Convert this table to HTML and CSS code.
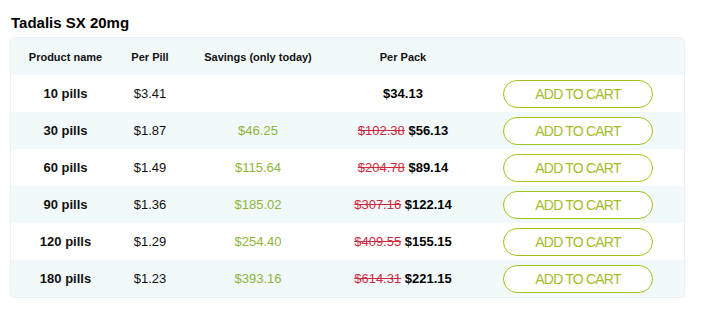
FILE: index.html
```html
<!DOCTYPE html>
<html>
<head>
<meta charset="utf-8">
<link rel="stylesheet" href="styles.css">
</head>
<body>
<h2 class="title">Tadalis SX 20mg</h2>
<div class="table">
  <div class="row head">
    <div>Product name</div><div>Per Pill</div><div>Savings (only today)</div><div>Per Pack</div><div></div>
  </div>
  <div class="row">
    <div class="name">10 pills</div><div>$3.41</div><div class="save"></div><div class="pack"><b>$34.13</b></div><div><button class="cart">ADD TO CART</button></div>
  </div>
  <div class="row alt">
    <div class="name">30 pills</div><div>$1.87</div><div class="save">$46.25</div><div class="pack"><s>$102.38</s> <b>$56.13</b></div><div><button class="cart">ADD TO CART</button></div>
  </div>
  <div class="row">
    <div class="name">60 pills</div><div>$1.49</div><div class="save">$115.64</div><div class="pack"><s>$204.78</s> <b>$89.14</b></div><div><button class="cart">ADD TO CART</button></div>
  </div>
  <div class="row alt">
    <div class="name">90 pills</div><div>$1.36</div><div class="save">$185.02</div><div class="pack"><s>$307.16</s> <b>$122.14</b></div><div><button class="cart">ADD TO CART</button></div>
  </div>
  <div class="row">
    <div class="name">120 pills</div><div>$1.29</div><div class="save">$254.40</div><div class="pack"><s>$409.55</s> <b>$155.15</b></div><div><button class="cart">ADD TO CART</button></div>
  </div>
  <div class="row alt">
    <div class="name">180 pills</div><div>$1.23</div><div class="save">$393.16</div><div class="pack"><s>$614.31</s> <b>$221.15</b></div><div><button class="cart">ADD TO CART</button></div>
  </div>
</div>
</body>
</html>
```
FILE: styles.css
```css
html, body {
  margin: 0;
  padding: 0;
  background: #fff;
}
body {
  padding: 14px 23px 0 10px;
  font-family: "Liberation Sans", Arial, sans-serif;
  color: #111;
}
.title {
  margin: 0 0 5px 1px;
  font-size: 15px;
  line-height: 18px;
  font-weight: bold;
  color: #000;
}
.table {
  width: 675px;
  border: 1px solid #e8f0f3;
  border-radius: 6px;
  box-sizing: border-box;
  overflow: hidden;
  background: #f1f9fb;
  box-shadow: 0 1px 2px rgba(0,0,0,0.04);
}
.row {
  display: grid;
  grid-template-columns: 109px 60px 156px 134px 1fr;
  height: 37px;
  align-items: center;
  background: #fff;
  font-size: 13px;
}
.row > div {
  text-align: center;
}
.row.alt, .row.head {
  background: #f1f9fb;
}
.row.head {
  font-size: 11px;
  font-weight: bold;
  color: #111;
}
.name {
  font-weight: bold;
}
.save {
  color: #8fb43c;
}
.pack s {
  color: #cc2a3e;
}
.pack b {
  color: #000;
}
.cart {
  display: block;
  margin: 0 0 0 33px;
  width: 150px;
  height: 28px;
  border: 1px solid #a2c21c;
  border-radius: 14px;
  background: #fff;
  color: #a4bc2a;
  font-family: "Liberation Sans", Arial, sans-serif;
  font-size: 14px;
  letter-spacing: -0.8px;
  padding: 0;
  cursor: pointer;
}
```
